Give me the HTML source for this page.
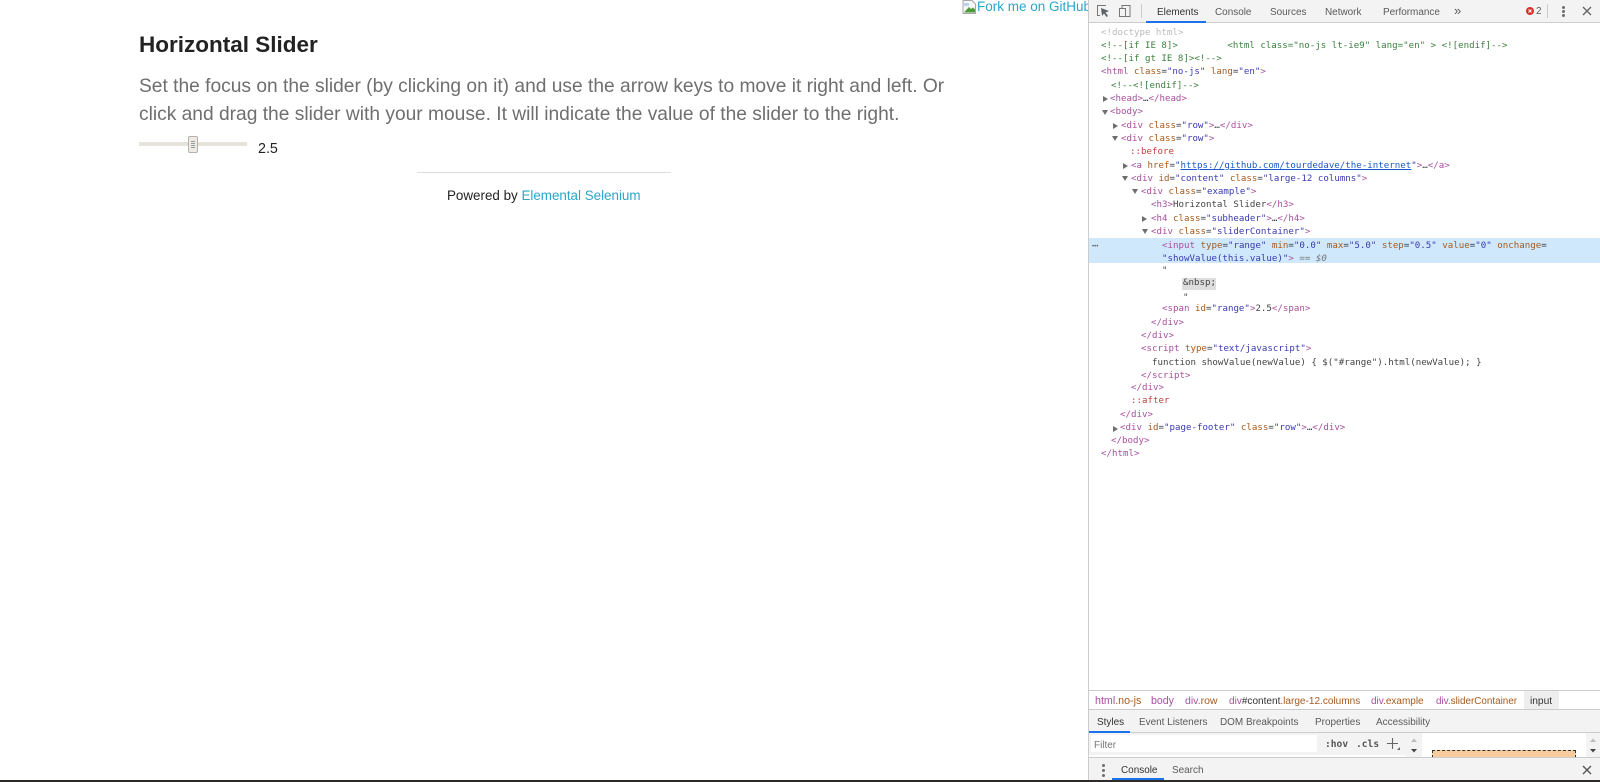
<!DOCTYPE html>
<html lang="en"><head><meta charset="utf-8"><title>Horizontal Slider</title>
<style>
html,body{margin:0;padding:0;width:1600px;height:782px;overflow:hidden;background:#fff}
body{position:relative;font-family:"Liberation Sans",sans-serif}
.a{position:absolute;white-space:nowrap}
#dt{position:absolute;left:1088px;top:0;width:512px;height:782px;background:#fff;border-left:1px solid #ccc;box-sizing:border-box;overflow:hidden}
.l{position:absolute;white-space:pre;font:9.13px/13px "DejaVu Sans Mono",monospace;color:#303942;height:13px}
.t{color:#a8509f}.n{color:#a65a1c}.v{color:#3a3ab0}.c{color:#3c7f3e}.p{color:#c04040}.g{color:#bbb}.k{color:#444}
.ui{position:absolute;white-space:nowrap;font:9.95px/13px "Liberation Sans",sans-serif;color:#5a5a5a}
.tri{position:absolute;width:0;height:0}
.tr{border-left:5px solid #6e6e6e;border-top:3px solid transparent;border-bottom:3px solid transparent}
.td{border-top:5px solid #6e6e6e;border-left:3px solid transparent;border-right:3px solid transparent}
.b{position:absolute;background:#ccc}
</style></head><body>
<div class="a" style="left:139px;top:31px;font-size:22.5px;line-height:28px;font-weight:bold;color:#222">Horizontal Slider</div>
<div class="a" style="left:139px;top:73px;font-size:19.2px;line-height:27.5px;color:#6f6f6f">Set the focus on the slider (by clicking on it) and use the arrow keys to move it right and left. Or<br>click and drag the slider with your mouse. It will indicate the value of the slider to the right.</div>
<div class="a" style="left:139px;top:142px;width:108px;height:4px;background:#e6e2dc"></div>
<div class="a" style="left:188px;top:136px;width:10px;height:17px;box-sizing:border-box;background:#eeeae4;border:1px solid #b5b1ab;border-radius:2px"></div>
<div class="a" style="left:191px;top:141px;width:4px;height:7px;background:repeating-linear-gradient(#999 0 1px,#eee 1px 2px)"></div>
<div class="a" style="left:258px;top:141px;font-size:14.3px;line-height:17px;color:#222">2.5</div>
<div class="a" style="left:417px;top:172px;width:254px;height:1px;background:#ddd"></div>
<div class="a" style="left:447px;top:186px;font-size:13.4px;line-height:17px;color:#222;padding-top:1px">Powered by <span style="color:#2ba6cb">Elemental Selenium</span></div>
<svg class="a" style="left:962px;top:0" width="15" height="14" viewBox="0 0 15 14"><path d="M1 0.5H10L13.5 4V13.5H1Z" fill="#f4f6f8" stroke="#a8a8a8"/><path d="M2 12.5L7 7L9 9L11 7.5L13 9.5V12.5Z" fill="#4d9a3a"/><path d="M2 3H7V6H2Z" fill="#bcd3f0"/></svg>
<div class="a" style="left:977px;top:-1px;font-size:13.5px;line-height:16px;color:#2ba6cb">Fork me on GitHub</div>

<div id="dt">
<div class="a" style="left:0;top:0;width:511px;height:22px;background:#f3f3f3"></div>
<div class="b" style="left:0;top:22px;width:511px;height:1px"></div>
<svg class="a" style="left:7px;top:4px" width="46" height="14" viewBox="0 0 46 14"><path d="M10 1.500H1.500V11.500H4" fill="none" stroke="#777"/><path d="M5 4L13 7L9.500 8.500L12 12L10.500 13L8 9.500L6 12Z" fill="#5f6368"/><rect x="23.500" y="4.500" width="6" height="8" fill="none" stroke="#777"/><path d="M26 4V1.500H34V12.500H29" fill="none" stroke="#777"/></svg>
<div class="b" style="left:52px;top:4px;width:1px;height:14px"></div>
<div class="ui" style="left:68px;top:6px;color:#333">Elements</div>
<div class="ui" style="left:126px;top:6px">Console</div>
<div class="ui" style="left:181px;top:6px">Sources</div>
<div class="ui" style="left:236px;top:6px">Network</div>
<div class="ui" style="left:294px;top:6px">Performance</div>
<div class="ui" style="left:365px;top:4px;font-size:13px">»</div>
<div class="a" style="left:57px;top:21px;width:60px;height:2px;background:#1a73e8"></div>
<svg class="a" style="left:437px;top:7px" width="8" height="8"><circle cx="4" cy="4" r="4" fill="#d9302a"/><path d="M2.500 2.500L5.500 5.500M5.500 2.500L2.500 5.500" stroke="#fff"/></svg>
<div class="ui" style="left:447px;top:5px">2</div>
<div class="b" style="left:458px;top:4px;width:1px;height:14px"></div>
<div class="a" style="left:473px;top:6px;width:3px;height:3px;background:#6e6e6e;border-radius:50%;box-shadow:0 4px 0 #6e6e6e,0 8px 0 #6e6e6e"></div>
<svg class="a" style="left:493px;top:6px" width="10" height="10"><path d="M1 1L9 9M9 1L1 9" stroke="#666" stroke-width="1.4"/></svg>

<div class="a" style="left:0;top:238px;width:511px;height:25px;background:#cfe8fc"></div>
<div class="a" style="left:3px;top:241px;font-size:6px;color:#666;line-height:13px">•••</div>

<div class="l g" style="left:12px;top:27px">&lt;!doctype html&gt;</div>
<div class="l c" style="left:12px;top:40px">&lt;!--[if IE 8]&gt;         &lt;html class="no-js lt-ie9" lang="en" &gt; &lt;![endif]--&gt;</div>
<div class="l c" style="left:12px;top:53px">&lt;!--[if gt IE 8]&gt;&lt;!--&gt;</div>
<div class="l" style="left:12px;top:66px"><span class="t">&lt;html</span> <span class="n">class</span>=<span class="v">"no-js"</span> <span class="n">lang</span>=<span class="v">"en"</span><span class="t">&gt;</span></div>
<div class="l c" style="left:22px;top:80px">&lt;!--&lt;![endif]--&gt;</div>
<div class="tri tr" style="left:14px;top:96px"></div>
<div class="l" style="left:21px;top:93px"><span class="t">&lt;head&gt;</span>…<span class="t">&lt;/head&gt;</span></div>
<div class="tri td" style="left:13px;top:110px"></div>
<div class="l t" style="left:21px;top:106px">&lt;body&gt;</div>
<div class="tri tr" style="left:24px;top:123px"></div>
<div class="l" style="left:32px;top:120px"><span class="t">&lt;div</span> <span class="n">class</span>=<span class="v">"row"</span><span class="t">&gt;</span>…<span class="t">&lt;/div&gt;</span></div>
<div class="tri td" style="left:23px;top:136px"></div>
<div class="l" style="left:32px;top:133px"><span class="t">&lt;div</span> <span class="n">class</span>=<span class="v">"row"</span><span class="t">&gt;</span></div>
<div class="l p" style="left:41px;top:146px">::before</div>
<div class="tri tr" style="left:34px;top:163px"></div>
<div class="l" style="left:42px;top:160px"><span class="t">&lt;a</span> <span class="n">href</span>=<span class="v">"<u style="color:#1a5ac8">https://github.com/tourdedave/the-internet</u>"</span><span class="t">&gt;</span>…<span class="t">&lt;/a&gt;</span></div>
<div class="tri td" style="left:33px;top:176px"></div>
<div class="l" style="left:42px;top:173px"><span class="t">&lt;div</span> <span class="n">id</span>=<span class="v">"content"</span> <span class="n">class</span>=<span class="v">"large-12 columns"</span><span class="t">&gt;</span></div>
<div class="tri td" style="left:43px;top:189px"></div>
<div class="l" style="left:52px;top:186px"><span class="t">&lt;div</span> <span class="n">class</span>=<span class="v">"example"</span><span class="t">&gt;</span></div>
<div class="l" style="left:62px;top:199px"><span class="t">&lt;h3&gt;</span><span class="k">Horizontal Slider</span><span class="t">&lt;/h3&gt;</span></div>
<div class="tri tr" style="left:53px;top:216px"></div>
<div class="l" style="left:62px;top:213px"><span class="t">&lt;h4</span> <span class="n">class</span>=<span class="v">"subheader"</span><span class="t">&gt;</span>…<span class="t">&lt;/h4&gt;</span></div>
<div class="tri td" style="left:53px;top:229px"></div>
<div class="l" style="left:62px;top:226px"><span class="t">&lt;div</span> <span class="n">class</span>=<span class="v">"sliderContainer"</span><span class="t">&gt;</span></div>
<div class="l" style="left:73px;top:240px"><span class="t">&lt;input</span> <span class="n">type</span>=<span class="v">"range"</span> <span class="n">min</span>=<span class="v">"0.0"</span> <span class="n">max</span>=<span class="v">"5.0"</span> <span class="n">step</span>=<span class="v">"0.5"</span> <span class="n">value</span>=<span class="v">"0"</span> <span class="n">onchange</span>=</div>
<div class="l" style="left:73px;top:253px"><span class="v">"showValue(this.value)"</span><span class="t">&gt;</span> <i style="color:#777">== $0</i></div>
<div class="l k" style="left:73px;top:265px">"</div>
<div class="a" style="left:93px;top:278px;width:34px;height:12px;background:#ddd"></div>
<div class="l k" style="left:94px;top:277px">&amp;nbsp;</div>
<div class="l k" style="left:94px;top:292px">"</div>
<div class="l" style="left:73px;top:303px"><span class="t">&lt;span</span> <span class="n">id</span>=<span class="v">"range"</span><span class="t">&gt;</span><span class="k">2.5</span><span class="t">&lt;/span&gt;</span></div>
<div class="l t" style="left:62px;top:317px">&lt;/div&gt;</div>
<div class="l t" style="left:52px;top:330px">&lt;/div&gt;</div>
<div class="l" style="left:52px;top:343px"><span class="t">&lt;script</span> <span class="n">type</span>=<span class="v">"text/javascript"</span><span class="t">&gt;</span></div>
<div class="l k" style="left:63px;top:357px">function showValue(newValue) { $("#range").html(newValue); }</div>
<div class="l t" style="left:52px;top:370px">&lt;/script&gt;</div>
<div class="l t" style="left:42px;top:382px">&lt;/div&gt;</div>
<div class="l p" style="left:42px;top:395px">::after</div>
<div class="l t" style="left:31px;top:409px">&lt;/div&gt;</div>
<div class="tri tr" style="left:24px;top:426px"></div>
<div class="l" style="left:31px;top:422px"><span class="t">&lt;div</span> <span class="n">id</span>=<span class="v">"page-footer"</span> <span class="n">class</span>=<span class="v">"row"</span><span class="t">&gt;</span>…<span class="t">&lt;/div&gt;</span></div>
<div class="l t" style="left:22px;top:435px">&lt;/body&gt;</div>
<div class="l t" style="left:12px;top:448px">&lt;/html&gt;</div>

<div class="b" style="left:0;top:690px;width:511px;height:1px"></div>
<div class="a" style="left:0;top:691px;width:511px;height:41px;background:#f3f3f3"></div>
<div class="a" style="left:0;top:691px;width:511px;height:18px;background:#fff"></div>
<div class="a" style="left:435px;top:691px;width:35px;height:18px;background:#eee"></div>
<div class="ui" style="left:6px;top:695px;font-size:10.7px;color:#a8509f">html<span style="color:#a65a1c">.no-js</span></div>
<div class="ui" style="left:62px;top:695px;font-size:10.6px;color:#a8509f">body</div>
<div class="ui" style="left:96px;top:695px;font-size:10.5px;color:#a8509f">div<span style="color:#a65a1c">.row</span></div>
<div class="ui" style="left:140px;top:695px;font-size:10.05px;color:#a8509f">div<span style="color:#333">#content</span><span style="color:#a65a1c">.large-12.columns</span></div>
<div class="ui" style="left:282px;top:695px;font-size:10px;color:#a8509f">div<span style="color:#a65a1c">.example</span></div>
<div class="ui" style="left:347px;top:695px;font-size:9.9px;color:#a8509f">div<span style="color:#a65a1c">.sliderContainer</span></div>
<div class="ui" style="left:441px;top:695px;font-size:10.2px;color:#333">input</div>
<div class="b" style="left:0;top:709px;width:511px;height:1px"></div>
<div class="ui" style="left:8px;top:716px;color:#333">Styles</div>
<div class="ui" style="left:50px;top:716px">Event Listeners</div>
<div class="ui" style="left:131px;top:716px">DOM Breakpoints</div>
<div class="ui" style="left:226px;top:716px">Properties</div>
<div class="ui" style="left:287px;top:716px">Accessibility</div>
<div class="a" style="left:0;top:731px;width:41px;height:2px;background:#1a73e8"></div>
<div class="b" style="left:41px;top:732px;width:470px;height:1px"></div>
<div class="a" style="left:0;top:733px;width:333px;height:24px;background:#f3f3f3"></div>
<div class="a" style="left:0;top:755px;width:317px;height:2px;background:#fff"></div>
<div class="a" style="left:2px;top:735px;width:226px;height:17px;background:#fff"></div>
<div class="ui" style="left:5px;top:739px;color:#777">Filter</div>
<div class="l" style="left:236px;top:738px;font-size:9.6px;font-weight:bold;color:#555">:hov</div>
<div class="l" style="left:267px;top:738px;font-size:9.6px;font-weight:bold;color:#555">.cls</div>
<svg class="a" style="left:298px;top:737px" width="14" height="14"><path d="M0 6.500H11M5.500 1V12" stroke="#666" stroke-width="1.100"/><path d="M13 10V13H10Z" fill="#666"/></svg>
<svg class="a" style="left:320px;top:737px" width="10" height="18"><path d="M2 5L5 1.500L8 5Z" fill="#bbb"/><path d="M2 12H8L5 15.500Z" fill="#444"/></svg>
<div class="a" style="left:333px;top:733px;width:164px;height:24px;background:#fff"></div>
<div class="a" style="left:343px;top:750px;width:144px;height:8px;box-sizing:border-box;background:#f9cc9d;border-top:1px dashed #333;border-left:1px dashed #333;border-right:1px dashed #333"></div>
<div class="a" style="left:497px;top:733px;width:14px;height:24px;background:#f3f3f3"></div>
<svg class="a" style="left:496px;top:737px" width="15" height="18"><path d="M5 5L8 1.500L11 5Z" fill="#bbb"/><path d="M5 12H11L8 15.500Z" fill="#444"/></svg>
<div class="b" style="left:0;top:757px;width:511px;height:1px"></div>
<div class="a" style="left:0;top:758px;width:511px;height:22px;background:#f3f3f3"></div>
<div class="a" style="left:13px;top:764px;width:3px;height:3px;background:#6e6e6e;border-radius:50%;box-shadow:0 5px 0 #6e6e6e,0 10px 0 #6e6e6e"></div>
<div class="ui" style="left:32px;top:764px;color:#333">Console</div>
<div class="ui" style="left:83px;top:764px">Search</div>
<div class="a" style="left:23px;top:778px;width:52px;height:2px;background:#1a73e8"></div>
<svg class="a" style="left:493px;top:765px" width="10" height="10"><path d="M1 1L9 9M9 1L1 9" stroke="#555" stroke-width="1.4"/></svg>
</div>
<div class="a" style="left:0;top:780px;width:1600px;height:2px;background:#2e2a28"></div>
</body></html>
